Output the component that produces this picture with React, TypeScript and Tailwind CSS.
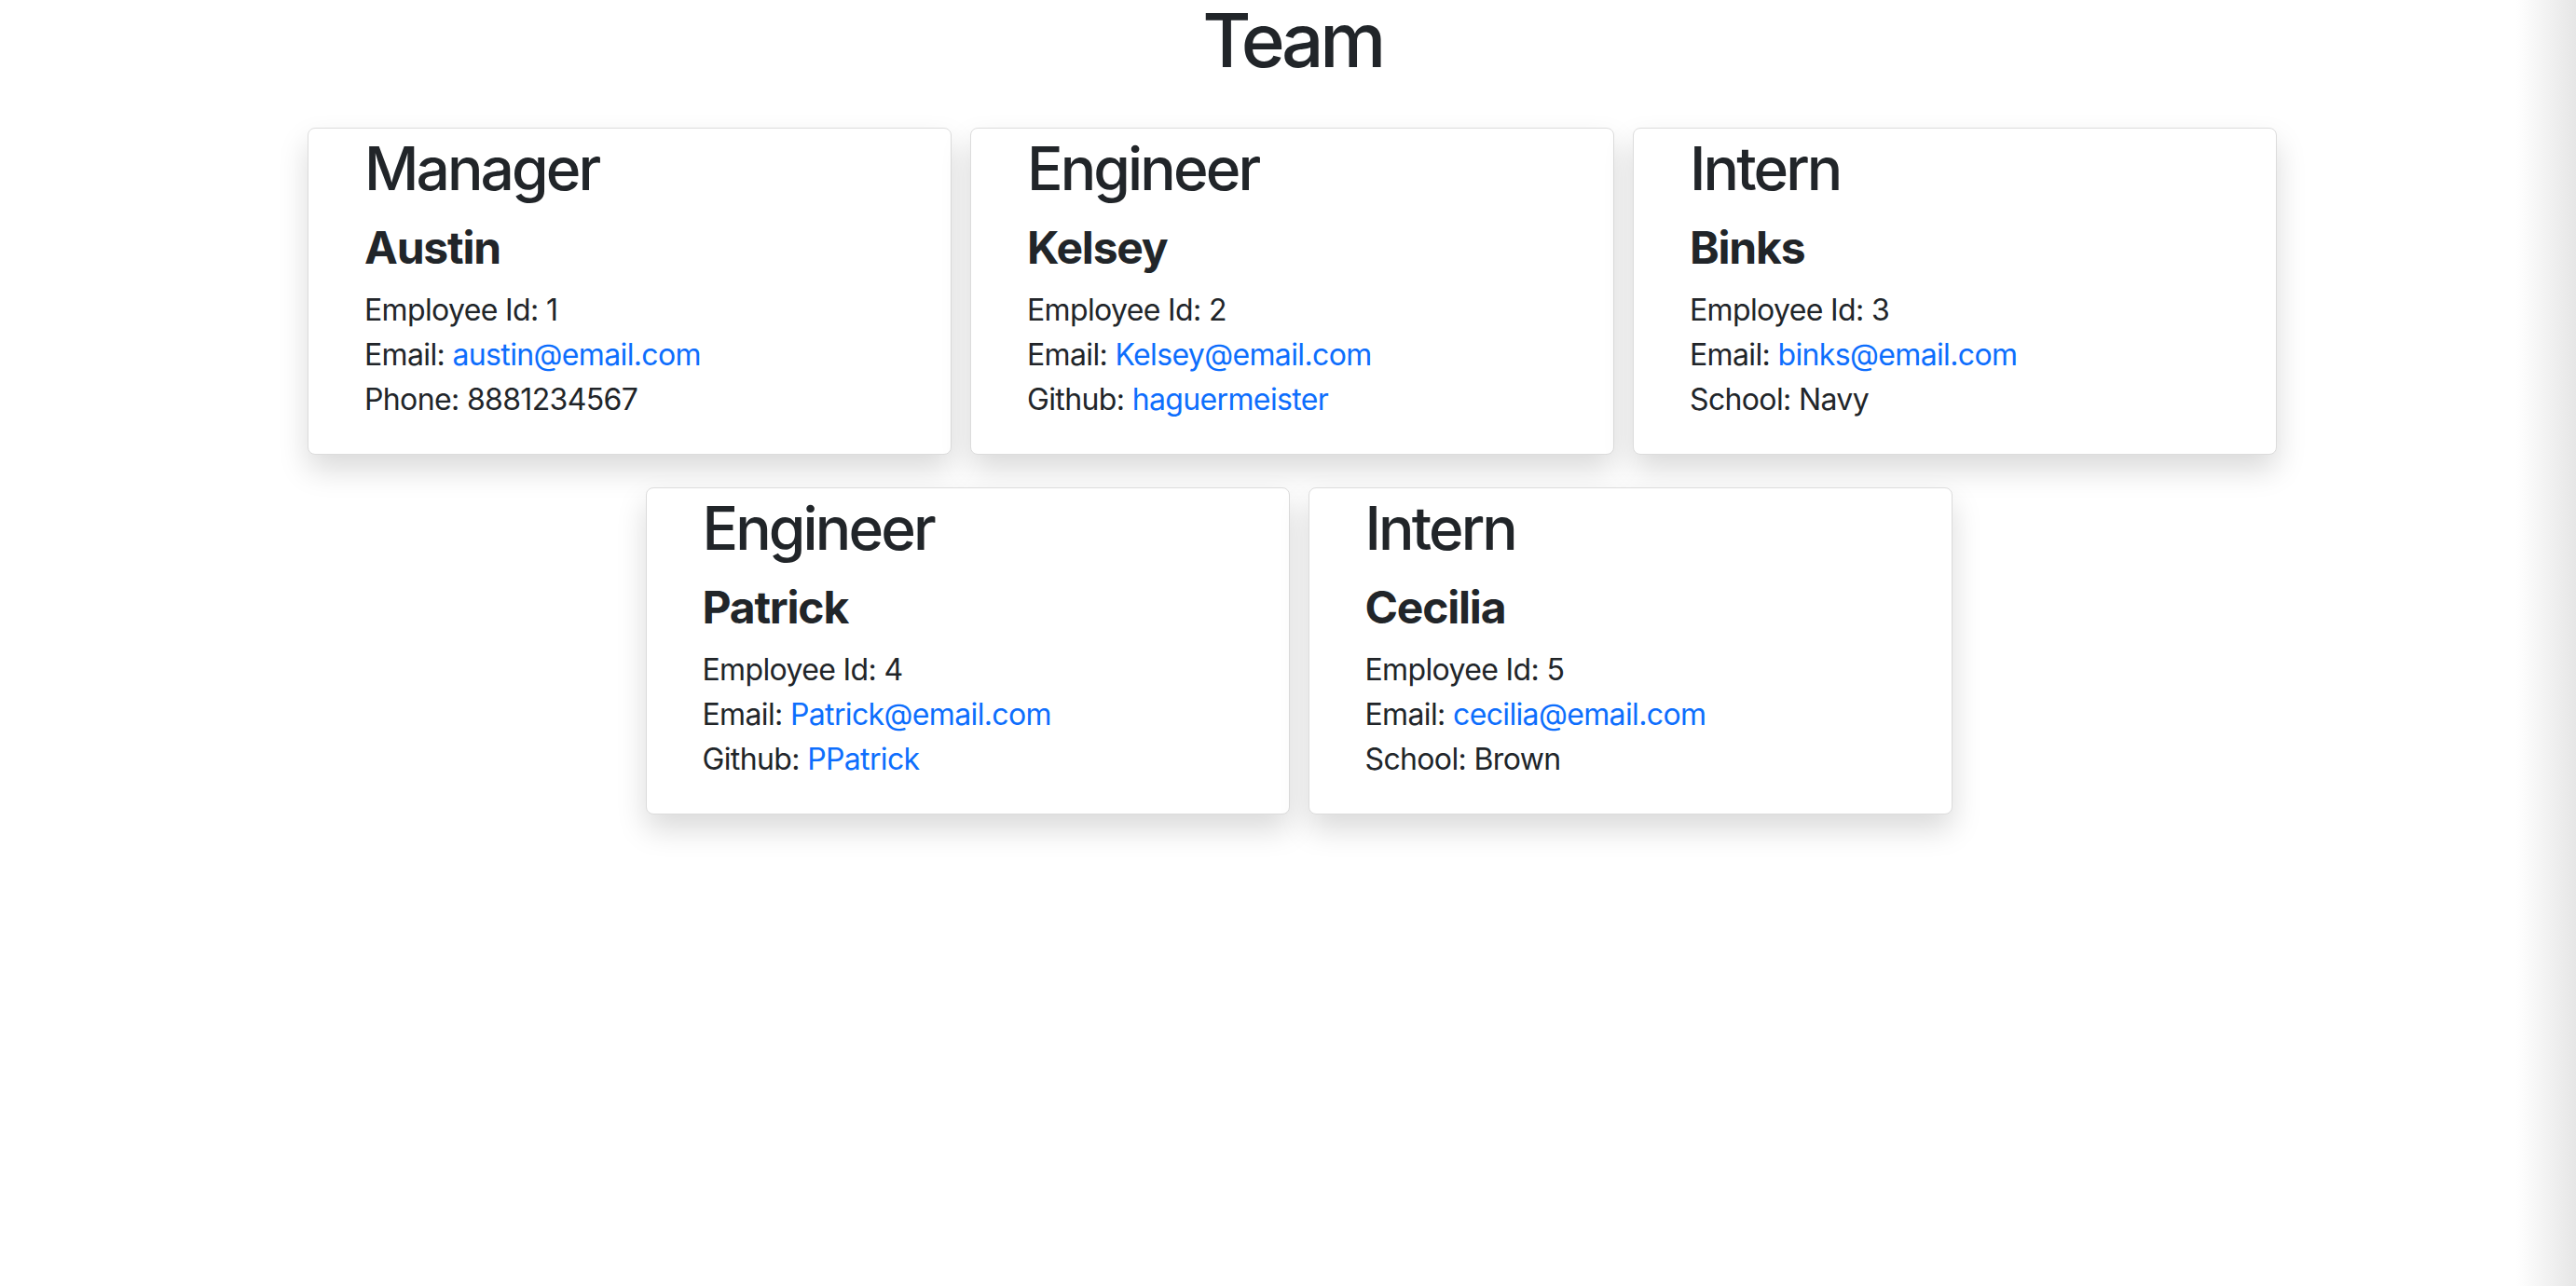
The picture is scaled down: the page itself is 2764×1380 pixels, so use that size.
import React from 'react';

type Member = {
  role: string;
  name: string;
  id: number;
  email: string;
  extraLabel: string;
  extraValue: string;
  extraLink?: boolean;
};

const team: Member[] = [
  { role: 'Manager', name: 'Austin', id: 1, email: 'austin@email.com', extraLabel: 'Phone', extraValue: '8881234567' },
  { role: 'Engineer', name: 'Kelsey', id: 2, email: 'Kelsey@email.com', extraLabel: 'Github', extraValue: 'haguermeister', extraLink: true },
  { role: 'Intern', name: 'Binks', id: 3, email: 'binks@email.com', extraLabel: 'School', extraValue: 'Navy' },
  { role: 'Engineer', name: 'Patrick', id: 4, email: 'Patrick@email.com', extraLabel: 'Github', extraValue: 'PPatrick', extraLink: true },
  { role: 'Intern', name: 'Cecilia', id: 5, email: 'cecilia@email.com', extraLabel: 'School', extraValue: 'Brown' },
];

const Card = ({ m }: { m: Member }) => {
  return (
    <div className="w-[691px] h-[351px] bg-white border border-[#dcdcdc] rounded-[8px] shadow-[0_16px_32px_rgba(0,0,0,0.15)] pl-[60px] pt-[4px]">
      <h2 className="text-[64px] leading-[77px] font-medium tracking-[-0.045em] mb-[18px]">{m.role}</h2>
      <h4 className="text-[48px] leading-[58px] font-bold tracking-[-0.025em] mb-[14px]">{m.name}</h4>
      <div className="text-[32px] leading-[48px] tracking-[-0.02em]">
        <div>Employee Id: {m.id}</div>
        <div>
          Email: <a href={`mailto:${m.email}`} className="text-[#0d6efd]">{m.email}</a>
        </div>
        <div>
          {m.extraLabel}:{' '}
          {m.extraLink ? (
            <a href="#" className="text-[#0d6efd]">{m.extraValue}</a>
          ) : (
            m.extraValue
          )}
        </div>
      </div>
    </div>
  );
};

const App = () => {
  return (
    <div className="relative min-h-[1380px] bg-white text-[#212529] font-['Inter','Liberation_Sans',sans-serif] overflow-hidden">
      <div className="pl-[9px]">
        <h1 className="text-center text-[80px] leading-[80px] font-medium tracking-[-0.055em] pt-[3px]">Team</h1>

        <div className="mt-[54px] flex justify-center gap-[20px]">
          {team.slice(0, 3).map((m) => (
            <Card key={m.id} m={m} />
          ))}
        </div>

        <div className="mt-[35px] flex justify-center gap-[20px] pl-[14px]">
          {team.slice(3).map((m) => (
            <Card key={m.id} m={m} />
          ))}
        </div>
      </div>

      <div className="absolute top-0 right-0 h-full w-[64px] bg-gradient-to-r from-white to-[#e6e6e6]" />
    </div>
  );
};

export default App;
